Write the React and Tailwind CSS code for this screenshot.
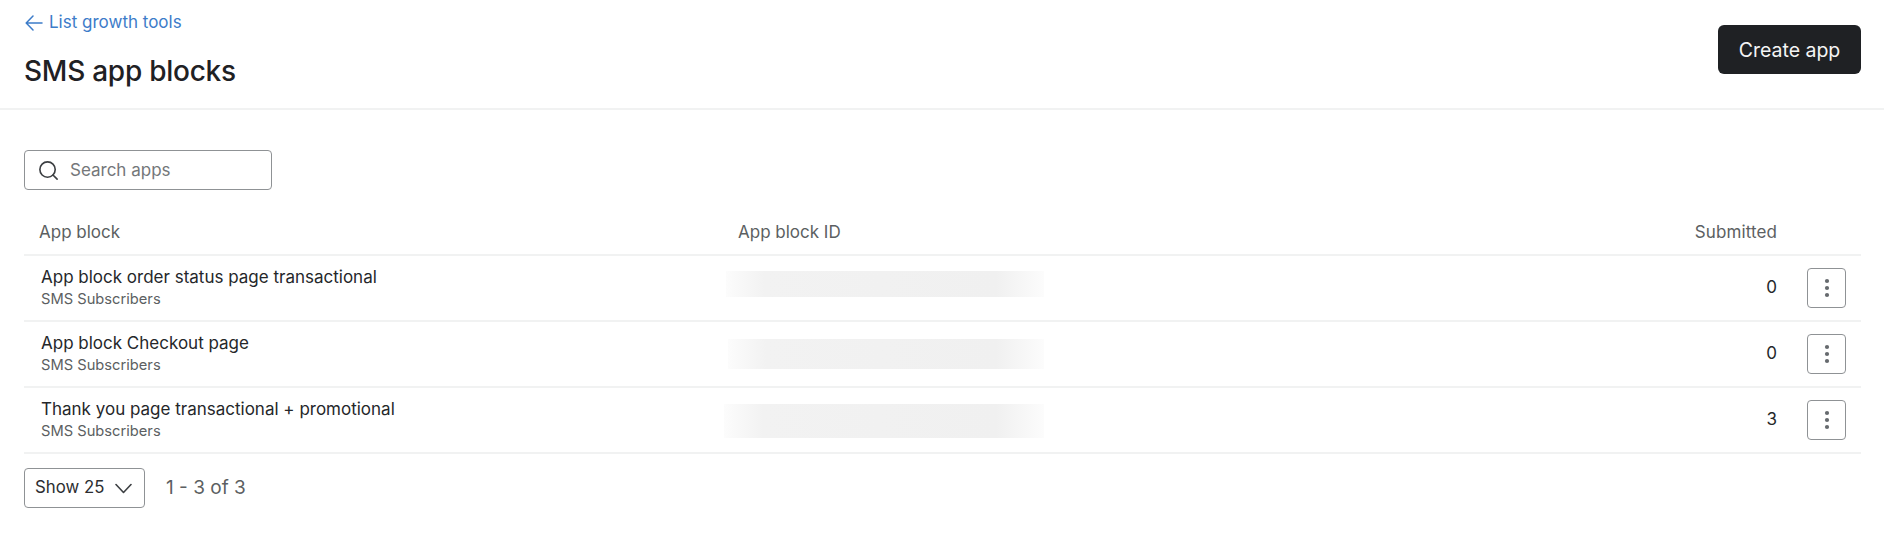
import React from 'react';
import { Search } from 'lucide-react';

const rows = [
  { name: 'App block order status page transactional', count: 0, blur: 'ml-[2px] mb-[8px] h-[26px]' },
  { name: 'App block Checkout page', count: 0, blur: 'ml-[4px] h-[30px]' },
  { name: 'Thank you page transactional + promotional', count: 3, blur: 'ml-0 mt-[1px] h-[34px]' },
];

const MoreIcon = () => (
  <svg width="6" height="20" viewBox="0 0 6 20" fill="#666a6e">
    <circle cx="3" cy="3" r="2.1" />
    <circle cx="3" cy="10" r="2.1" />
    <circle cx="3" cy="17" r="2.1" />
  </svg>
);

const BackArrow = () => (
  <svg width="18" height="16" viewBox="0 0 18 16" fill="none" stroke="#3d7cc9" strokeWidth="1.5" strokeLinecap="round" strokeLinejoin="round">
    <path d="M17 8H1.5M8 1 1.2 8 8 15" />
  </svg>
);

const Chevron = () => (
  <svg width="17" height="11" viewBox="0 0 17 11" fill="none" stroke="#3c3f42" strokeWidth="1.6" strokeLinecap="round" strokeLinejoin="round">
    <path d="M1 1.5 8.5 9.5 16 1.5" />
  </svg>
);

export default function App() {
  return (
    <div className="min-h-[534px] bg-white font-['Inter',sans-serif] text-[#25272a]">
      {/* Header */}
      <div className="flex h-[110px] items-start justify-between border-b-2 border-[#f1f2f2] pl-6 pr-[23px]">
        <div>
          <a className="mt-[11px] flex h-6 items-center text-[17px] text-[#3d7cc9]">
            <span className="mr-[6px] ml-[1px]"><BackArrow /></span>
            List growth tools
          </a>
          <h1 className="mt-[18px] text-[28px] leading-9 font-medium tracking-[-0.25px] text-[#1f2124]">SMS app blocks</h1>
        </div>
        <button className="mt-[25px] h-[49px] w-[143px] rounded-md bg-[#1f2124] pt-[2px] text-[19.5px] text-[#f4f4f4]">Create app</button>
      </div>

      <div className="pl-6 pr-[23px]">
        {/* Search */}
        <div className="mt-10 flex h-10 w-[248px] items-center rounded border border-[#8f9295] pl-[12px]">
          <Search className="h-[23px] w-[23px] text-[#3c3f42]" strokeWidth={1.7} />
          <span className="ml-[10px] pt-[2px] text-[17px] text-[#74777a]">Search apps</span>
        </div>

        {/* Table */}
        <div className="mt-[22px] flex h-[44px] items-center border-b-2 border-[#f1f2f2] text-[17px] text-[#5c5f62]">
          <div className="w-[714px] pl-[15px]">App block</div>
          <div className="flex-1">App block ID</div>
          <div className="mr-[84px] tracking-[0.1px]">Submitted</div>
        </div>
        {rows.map((row) => (
          <div key={row.name} className="flex h-[66px] items-center border-b-2 border-[#f1f2f2] pr-[15px]">
            <div className="w-[700px] pb-[2px] pl-[17px]">
              <div className="text-[17px] leading-5">{row.name}</div>
              <div className="mt-[3px] text-[14.7px] leading-[18px] text-[#5c5f62]">SMS Subscribers</div>
            </div>
            <div className="w-[320px]">
              <div
                className={`${row.blur} bg-[linear-gradient(90deg,#fcfcfc_0%,#f2f2f2_12%,#f0f0f0_85%,#fcfcfc_100%)]`}
              />
            </div>
            <div className="flex-1 text-right text-[17px]">{row.count}</div>
            <button className="ml-[30px] flex h-10 w-[39px] items-center justify-center rounded border border-[#8f9295]">
              <MoreIcon />
            </button>
          </div>
        ))}

        {/* Pagination */}
        <div className="mt-[14px] flex items-center">
          <div className="flex h-10 w-[121px] items-center rounded border border-[#8f9295] pl-[10px] text-[16.8px] text-[#2c2e31]">
            Show 25
            <span className="ml-[11px]"><Chevron /></span>
          </div>
          <span className="ml-[21px] text-[19px] text-[#5c5f62]">1 - 3 of 3</span>
        </div>
      </div>
    </div>
  );
}
